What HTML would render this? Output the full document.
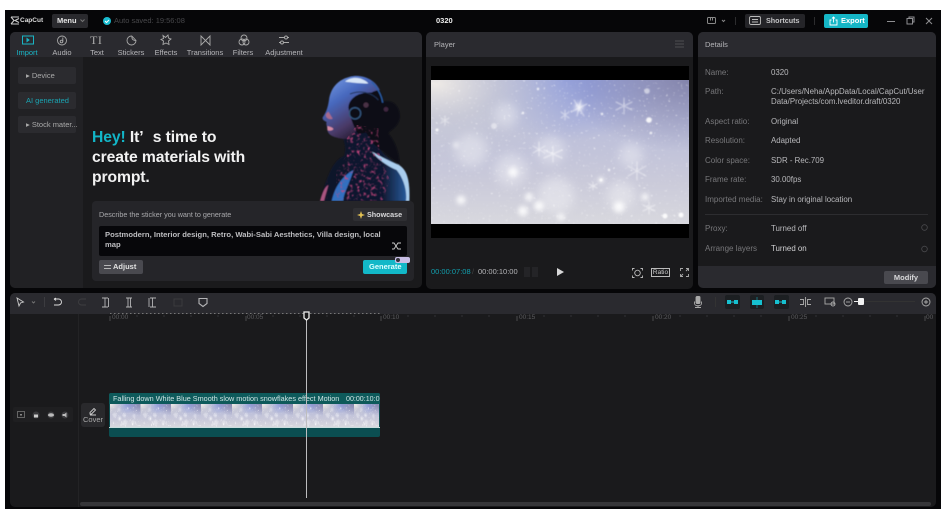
<!DOCTYPE html>
<html><head><meta charset="utf-8">
<style>
html,body{margin:0;padding:0;background:#fff;width:948px;height:522px;overflow:hidden}
*{box-sizing:border-box}
body{font-family:"Liberation Sans",sans-serif;position:relative}
#w{position:absolute;left:0;top:0;width:948px;height:522px;filter:blur(.35px)}
.a{position:absolute}
.t{position:absolute;white-space:nowrap;line-height:10px;font-size:7.5px;color:#b9b9bc}
.tab{position:absolute;top:48px;transform:translateX(-50%);font-size:7.5px;line-height:10px;color:#b5b5b8;white-space:nowrap}
.side{position:absolute;left:18px;width:58px;background:#2b2b2f;border-radius:2px;font-size:7.5px;line-height:17px;color:#aaa;padding-left:8px;white-space:nowrap}
.l{position:absolute;left:705px;font-size:8px;line-height:10px;color:#77777a;white-space:nowrap}
.v{position:absolute;left:771px;font-size:7.9px;line-height:10px;color:#b8b8bb;white-space:nowrap}
.r{position:absolute;top:314px;font-size:6.5px;line-height:8px;color:#5c5c5f;white-space:nowrap}
svg{position:absolute;overflow:visible}
</style></head><body><div id="w">
<div class="a" style="left:5px;top:10px;width:936px;height:499px;background:#060608"></div>

<!-- top bar -->
<svg style="left:10px;top:16px" width="10" height="9" viewBox="0 0 10 9" fill="none" stroke="#ccc" stroke-width="1.100"><path d="M1 1h8M1 8h8M1 1l3 3.500-3 3.500M9 2.500L5 4.500l4 2"/></svg>
<div class="t" style="left:20px;top:16px;color:#ddd;font-weight:bold;font-size:6.500px">CapCut</div>
<div class="a" style="left:52px;top:14px;width:36px;height:14px;background:#2a2a2e;border-radius:2px"></div>
<div class="t" style="left:57px;top:16px;color:#e6e6e6;font-weight:bold;font-size:7.500px">Menu</div>
<svg style="left:80px;top:19px" width="5" height="4" fill="none" stroke="#777"><path d="M.5 .5l2 2 2-2"/></svg>
<div class="a" style="left:103px;top:17px;width:8px;height:8px;border-radius:50%;background:#19bcd0"></div>
<svg style="left:103px;top:17px" width="8" height="8" fill="none" stroke="#fff"><path d="M2 4l1.500 1.500L6 3"/></svg>
<div class="t" style="left:114px;top:16px;color:#47474a">Auto saved: 19:56:08</div>
<div class="t" style="left:436px;top:16px;color:#eee;font-weight:bold;font-size:7.500px">0320</div>
<svg style="left:707px;top:17px" width="24" height="8" fill="none" stroke="#888"><rect x=".5" y=".5" width="8" height="6" rx="1"/><path d="M3.500 .5v3M5.500 .5v3M15 3l1.500 1.500L18 3"/></svg>
<div class="a" style="left:735px;top:17px;width:1px;height:8px;background:#2c2c2e"></div>
<div class="a" style="left:745px;top:14px;width:60px;height:14px;background:#242428;border-radius:2px"></div>
<svg style="left:749px;top:16px" width="12" height="10" fill="none" stroke="#bbb" stroke-width=".9"><rect x=".5" y=".5" width="11" height="8" rx="1.500"/><path d="M3 3.500h6M3 6h6"/></svg>
<div class="t" style="left:766px;top:16px;color:#c4c4c6;font-weight:bold;font-size:7.200px">Shortcuts</div>
<div class="a" style="left:814px;top:17px;width:1px;height:8px;background:#2c2c2e"></div>
<div class="a" style="left:824px;top:14px;width:44px;height:14px;background:#15b6c6;border-radius:2px"></div>
<svg style="left:829px;top:16px" width="9" height="10" fill="none" stroke="#fff" stroke-width=".9"><path d="M2.500 4H1v5h7V4H6.500M4.500 6.500V1M3 2.500L4.500 1 6 2.500"/></svg>
<div class="t" style="left:841px;top:16px;color:#fff;font-weight:bold;font-size:7.500px">Export</div>
<svg style="left:886px;top:16px" width="50" height="10" fill="none" stroke="#8f8f92"><path d="M1 5.500h8"/><rect x="21" y="2.500" width="5.500" height="5.500"/><path d="M23 2.500V1h5v5h-1.500M40 2l6 6M46 2l-6 6"/></svg>

<!-- left panel -->
<div class="a" style="left:10px;top:32px;width:412px;height:256px;background:#1a1a1c;border-radius:5px;overflow:hidden">
  <div class="a" style="left:0;top:0;width:412px;height:25px;background:#2a2a2f"></div>
  <div class="a" style="left:0;top:25px;width:73px;height:231px;background:#212124"></div>
</div>
<svg style="left:22px;top:35px" width="12" height="10" fill="none" stroke="#19b5c5"><rect x=".5" y="1" width="11" height="8"/><path d="M5 3.500l2 1.500-2 1.500z" fill="#19b5c5"/></svg>
<svg style="left:56px;top:35px" width="12" height="11" fill="none" stroke="#aaa" stroke-width=".9"><circle cx="6" cy="5.500" r="4.500"/><circle cx="5.500" cy="6.500" r="1.300"/><path d="M6.800 6.500V2.500"/></svg>
<div class="t" style="left:90px;top:34px;font-family:'Liberation Serif',serif;font-size:12px;line-height:12px;color:#aaa;letter-spacing:.5px">TI</div>
<svg style="left:126px;top:35px" width="11" height="11" fill="none" stroke="#aaa" stroke-width=".9"><path d="M5.500 1a4.500 4.500 0 1 0 4.500 4.500L6 1.200z"/><path d="M6 1.200C5.500 4 7 5.500 10 5.500"/></svg>
<svg style="left:160px;top:34px" width="12" height="12" fill="none" stroke="#aaa" stroke-width=".9"><path d="M3 1.500l2.500 2L8 1l.5 3L11 5 8.500 7l.5 3.500-3-1.500-3 1.500.5-3.500L1 5.500l2.500-1z"/></svg>
<svg style="left:200px;top:35px" width="11" height="11" fill="none" stroke="#aaa" stroke-width=".9"><path d="M1 1v9l4.500-4.500zM10 1v9L5.500 5.500z"/></svg>
<svg style="left:238px;top:34px" width="12" height="12" fill="none" stroke="#aaa" stroke-width=".9"><circle cx="6" cy="4" r="3"/><circle cx="4" cy="8" r="3"/><circle cx="8" cy="8" r="3"/></svg>
<svg style="left:278px;top:34px" width="12" height="12" fill="none" stroke="#aaa" stroke-width=".9"><path d="M1 3.500h5.500M9.500 3.500H11M1 8.500h1.500M5.500 8.500H11"/><circle cx="8" cy="3.500" r="1.500"/><circle cx="4" cy="8.500" r="1.500"/></svg>
<div class="tab" style="left:27px;color:#19b5c5">Import</div>
<div class="tab" style="left:62px">Audio</div>
<div class="tab" style="left:97px">Text</div>
<div class="tab" style="left:131px">Stickers</div>
<div class="tab" style="left:166px">Effects</div>
<div class="tab" style="left:205px">Transitions</div>
<div class="tab" style="left:243px">Filters</div>
<div class="tab" style="left:284px">Adjustment</div>

<div class="side" style="top:67px;height:17px">▸ Device</div>
<div class="side" style="top:92px;height:17px;color:#1aa5b3">AI generated</div>
<div class="side" style="top:116px;height:17px">▸ Stock mater...</div>

<div class="a" style="left:92px;top:128px;width:180px;font-size:15.700px;line-height:20px;font-weight:bold;color:#f2f2f2;letter-spacing:-.1px;white-space:nowrap"><span style="color:#12b5c7">Hey!</span> It<span style="margin-right:5px">’</span> s time to<br>create materials with<br>prompt.</div>

<!-- woman -->
<svg style="left:300px;top:70px" width="120" height="131" viewBox="0 0 360 393">
<defs>
<linearGradient id="sk" x1="0" y1="0" x2=".6" y2="1"><stop offset="0" stop-color="#7fa4ec"/><stop offset=".4" stop-color="#4768bd"/><stop offset=".75" stop-color="#4a3a68"/><stop offset="1" stop-color="#20182c"/></linearGradient>
<linearGradient id="bd" x1="0" y1="0" x2="1" y2="0"><stop offset="0" stop-color="#12142a"/><stop offset=".7" stop-color="#101830"/><stop offset="1" stop-color="#2a62a8"/></linearGradient>
<filter id="bl"><feGaussianBlur stdDeviation="1.500"/></filter>
<filter id="pk" x="0" y="0" width="100%" height="100%" color-interpolation-filters="sRGB"><feTurbulence type="fractalNoise" baseFrequency=".1" numOctaves="2" seed="7"/><feColorMatrix values="0 0 0 0 .8 0 0 0 0 .28 0 0 0 0 .5 4 0 0 0 -2.150"/><feGaussianBlur stdDeviation="1.500"/></filter>
<clipPath id="nk"><path d="M140 205L140 255 110 300 105 392 250 392 270 330 240 255 235 175 170 165z"/></clipPath>
</defs>
<g filter="url(#bl)">
<path d="M130 205C135 225 140 245 130 260C100 270 80 320 60 393L328 393C330 340 325 300 295 285C270 270 250 255 240 235L235 170L150 150z" fill="url(#bd)"/>
<path d="M150 18C200 10 245 50 250 95C285 85 305 120 298 150C290 175 270 180 265 190C290 220 300 260 298 285C270 260 240 240 220 220L160 130z" fill="#0a0c18"/>
<path d="M165 18C120 22 92 50 87 90C84 110 80 125 68 142C66 150 75 153 80 156C76 165 84 172 82 180C85 196 100 202 130 207C170 205 175 170 170 130C175 90 215 60 240 60C225 30 195 16 165 18z" fill="url(#sk)"/>
<path d="M145 112C148 78 190 58 240 72L258 130 232 182 175 192C160 170 150 140 145 112z" fill="#0a0c18"/>
<path d="M135 35C160 15 190 25 205 40C190 42 160 38 135 35z" fill="#d7e5f7"/>
<path d="M215 36C232 52 246 78 248 98" fill="none" stroke="#2a5fa8" stroke-width="4"/>
<path d="M78 132C75 146 92 150 98 146L85 125z" fill="#a96a8c"/>
<path d="M82 168C88 170 100 172 100 178C92 184 86 182 82 180z" fill="#d48aa4"/>
<circle cx="165" cy="130" r="17" fill="none" stroke="#34567f" stroke-width="4"/>
<path d="M150 72C180 60 215 66 235 90" fill="none" stroke="#243254" stroke-width="3"/>
<circle cx="198" cy="105" r="8" fill="#4a3045"/>
<circle cx="258" cy="118" r="7" fill="#40263f"/>
<path d="M95 393C105 350 125 320 160 300C150 340 130 370 130 393z" fill="#3070c0"/>
<path d="M215 245C235 270 265 290 290 300C310 325 322 360 318 393L328 393C330 340 325 295 290 282C260 270 235 255 215 245z" fill="#a9cdee"/>
<path d="M60 393C66 370 75 350 85 345C80 365 75 380 72 393z" fill="#a85580"/>
</g>
<rect x="100" y="160" width="180" height="233" filter="url(#pk)" clip-path="url(#nk)"/>
</svg>

<!-- prompt card -->
<div class="a" style="left:92px;top:201px;width:322px;height:80px;background:#252529;border-radius:4px"></div>
<div class="t" style="left:99px;top:210px;color:#a9a9ac;font-size:7.200px">Describe the sticker you want to generate</div>
<div class="a" style="left:353px;top:208px;width:54px;height:13px;background:#2f2f33;border-radius:2px"></div>
<svg style="left:357px;top:211px" width="8" height="8" fill="#e3c254"><path d="M4 0l1 3 3 1-3 1-1 3-1-3-3-1 3-1z"/></svg>
<div class="t" style="left:367px;top:210px;color:#d8d8da;font-weight:bold;font-size:7.200px">Showcase</div>
<div class="a" style="left:99px;top:226px;width:308px;height:30px;background:#07070a;border-radius:2px"></div>
<div class="t" style="left:105px;top:230px;color:#bdbdc0;font-weight:bold;font-size:7.650px">Postmodern, Interior design, Retro, Wabi-Sabi Aesthetics, Villa design, local</div>
<div class="t" style="left:105px;top:240px;color:#bdbdc0;font-weight:bold;font-size:7.650px">map</div>
<svg style="left:392px;top:242px" width="9" height="8" fill="none" stroke="#ccc" stroke-width=".9"><path d="M0 1h2l4 6h3M0 7h2l4-6h3"/></svg>
<div class="a" style="left:99px;top:260px;width:44px;height:14px;background:#49494f;border-radius:2px"></div>
<svg style="left:104px;top:264px" width="7" height="6" fill="none" stroke="#ddd" stroke-width=".8"><path d="M0 1.500h7M0 4.500h7"/></svg>
<div class="t" style="left:113px;top:262px;color:#e2e2e2;font-weight:bold">Adjust</div>
<div class="a" style="left:363px;top:260px;width:44px;height:14px;background:#12b8c8;border-radius:2px"></div>
<div class="t" style="left:369px;top:262px;color:#dff;font-weight:bold">Generate</div>
<div class="a" style="left:395px;top:257px;width:15px;height:6px;background:#c9bfe6;border-radius:2px"></div>
<div class="a" style="left:396px;top:258px;width:4px;height:4px;background:#33333a;border-radius:50%"></div>

<!-- player -->
<div class="a" style="left:426px;top:32px;width:267px;height:257px;background:#1a1a1c;border-radius:5px;overflow:hidden">
  <div class="a" style="left:0;top:0;width:267px;height:25px;background:#2a2a2f"></div>
</div>
<div class="t" style="left:434px;top:40px;color:#b5b5b8">Player</div>
<svg style="left:675px;top:40px" width="9" height="8" stroke="#4e4e52"><path d="M0 1h9M0 4h9M0 7h9"/></svg>
<div class="a" style="left:431px;top:66px;width:258px;height:172px;background:#000"></div>

<svg width="0" height="0" style="left:0;top:0">
<defs>
<linearGradient id="sb" x1="0" y1="0" x2="0" y2="1"><stop offset="0" stop-color="#aeb3d8"/><stop offset=".35" stop-color="#bcbfda"/><stop offset=".7" stop-color="#cacada"/><stop offset="1" stop-color="#d8d8de"/></linearGradient>
<radialGradient id="sc" cx=".02" cy=".03" r=".6"><stop offset="0" stop-color="#eeeae6"/><stop offset=".4" stop-color="#cfcfd6" stop-opacity=".7"/><stop offset="1" stop-color="#cfcfd6" stop-opacity="0"/></radialGradient>
<radialGradient id="sd" cx=".52" cy="0" r=".42"><stop offset="0" stop-color="#8494dc" stop-opacity=".9"/><stop offset="1" stop-color="#8f9ddd" stop-opacity="0"/></radialGradient>
<radialGradient id="se" cx="1" cy="0" r=".5"><stop offset="0" stop-color="#7878a0" stop-opacity=".8"/><stop offset="1" stop-color="#7f7fa8" stop-opacity="0"/></radialGradient>
<filter id="sn" x="0" y="0" width="100%" height="100%" color-interpolation-filters="sRGB"><feTurbulence type="fractalNoise" baseFrequency=".4" numOctaves="2" seed="11"/><feColorMatrix values="0 0 0 0 1 0 0 0 0 1 0 0 0 0 1 6 0 0 0 -4.100"/><feGaussianBlur stdDeviation=".45"/></filter>
<filter id="b3"><feGaussianBlur stdDeviation="5"/></filter>
<filter id="b2"><feGaussianBlur stdDeviation="2.500"/></filter>
<filter id="b1"><feGaussianBlur stdDeviation=".7"/></filter>
<symbol id="snow" viewBox="0 0 258 144" preserveAspectRatio="none">
<rect width="258" height="144" fill="url(#sb)"/>
<rect width="258" height="144" fill="url(#sd)"/>
<rect width="258" height="144" fill="url(#se)"/>
<rect width="258" height="144" fill="url(#sc)"/>
<g fill="#fff" filter="url(#b3)" opacity=".35">
<circle cx="40" cy="70" r="16"/><circle cx="80" cy="90" r="16"/><circle cx="125" cy="115" r="18"/><circle cx="190" cy="115" r="14"/><circle cx="120" cy="70" r="14"/><circle cx="75" cy="35" r="12"/><circle cx="200" cy="75" r="12"/>
</g>
<rect width="258" height="144" filter="url(#sn)" opacity=".6"/>
<g fill="#fff" filter="url(#b2)" opacity=".85">
<circle cx="30" cy="120" r="4.500"/><circle cx="92" cy="131" r="5"/><circle cx="108" cy="126" r="5"/><circle cx="98" cy="117" r="4"/><circle cx="188" cy="127" r="5.500"/><circle cx="82" cy="92" r="5"/><circle cx="170" cy="100" r="3"/><circle cx="148" cy="27" r="4"/><circle cx="214" cy="117" r="3.500"/><circle cx="130" cy="137" r="3.500"/><circle cx="25" cy="65" r="2.500"/>
</g>
<g fill="#fff" filter="url(#b1)" opacity=".9">
<circle cx="218" cy="40" r="2.800"/><circle cx="216" cy="11" r="2.800" opacity=".6"/><circle cx="63" cy="46" r="3" opacity=".5"/><circle cx="6" cy="50" r="1.500"/><circle cx="92" cy="33" r="1.200"/><circle cx="107" cy="9" r="1.200"/><circle cx="171" cy="34" r="1.200"/><circle cx="220" cy="53" r="1.200"/><circle cx="178" cy="90" r="1.200"/><circle cx="170" cy="100" r="1.500"/><circle cx="250" cy="135" r="2.500"/><circle cx="234" cy="136" r="2.500"/>
</g>
<g stroke="#fff" stroke-width="1" opacity=".55" fill="none" stroke-linecap="round" filter="url(#b1)">
<path d="M143 20l10 16M156 24l-16 8M150 20l-4 16M193 18v16M185 22l16 8M201 22l-16 8M122 66v16M113 70l18 8M131 70l-18 8M108 62v14M102 66l12 7M114 66l-12 7M206 82v18M197 86l18 10M215 86l-18 10M14 36v9M10 38l8 5M18 38l-8 5M134 30v10M130 32l8 6M138 32l-8 6M218 122v12M212 125l12 6M224 125l-12 6M162 102v8M158 104l8 4M166 104l-8 4"/>
</g>
</symbol>
</defs>
</svg>
<svg style="left:431px;top:80px" width="258" height="144"><use href="#snow" width="258" height="144"/></svg>

<div class="t" style="left:431px;top:267px;color:#129fae">00:00:07:08</div>
<div class="t" style="left:472px;top:267px;color:#444">/</div>
<div class="t" style="left:478px;top:267px;color:#b5b5b8">00:00:10:00</div>
<svg style="left:524px;top:267px" width="14" height="11" stroke="#36363a" stroke-width=".8"><path d="M0 1h6M0 3h6M0 5h6M0 7h6M0 9h6M8 1h6M8 3h6M8 5h6M8 7h6M8 9h6"/></svg>
<svg style="left:557px;top:268px" width="7" height="8" fill="#d8d8d8"><path d="M0 0l7 4-7 4z"/></svg>
<svg style="left:632px;top:268px" width="11" height="10" fill="none" stroke="#bbb" stroke-width=".9"><circle cx="5.500" cy="5" r="2.800"/><path d="M.5 2.500V.5h2M8.500 .5h2v2M.5 7.500v2h2M8.500 9.500h2v-2"/></svg>
<div class="a" style="left:651px;top:268px;width:19px;height:9px;border:1px solid #bbb;font-size:6.500px;line-height:7px;color:#ccc;text-align:center">Ratio</div>
<svg style="left:680px;top:268px" width="9" height="9" fill="none" stroke="#aaa" stroke-width=".9"><path d="M.5 3V.5H3M6 .5h2.500V3M.5 6v2.500H3M6 8.500h2.500V6M1 8l2-2M8 1L6 3"/></svg>

<!-- details -->
<div class="a" style="left:698px;top:32px;width:238px;height:256px;background:#1a1a1c;border-radius:5px;overflow:hidden">
  <div class="a" style="left:0;top:0;width:238px;height:25px;background:#2a2a2f"></div>
  <div class="a" style="left:0;top:234px;width:238px;height:22px;background:#2a2a2f"></div>
</div>
<div class="t" style="left:705px;top:40px;color:#b5b5b8">Details</div>
<div class="l" style="top:68px">Name:</div><div class="v" style="top:68px">0320</div>
<div class="l" style="top:87px">Path:</div><div class="v" style="top:87px">C:/Users/Neha/AppData/Local/CapCut/User</div><div class="v" style="top:97px">Data/Projects/com.lveditor.draft/0320</div>
<div class="l" style="top:117px">Aspect ratio:</div><div class="v" style="top:117px">Original</div>
<div class="l" style="top:136px">Resolution:</div><div class="v" style="top:136px">Adapted</div>
<div class="l" style="top:156px">Color space:</div><div class="v" style="top:156px">SDR - Rec.709</div>
<div class="l" style="top:175px">Frame rate:</div><div class="v" style="top:175px">30.00fps</div>
<div class="l" style="top:195px">Imported media:</div><div class="v" style="top:195px">Stay in original location</div>
<div class="a" style="left:705px;top:214px;width:223px;height:1px;background:#2d2d30"></div>
<div class="l" style="top:224px">Proxy:</div><div class="v" style="top:224px">Turned off</div>
<div class="l" style="top:244px">Arrange layers</div><div class="v" style="top:244px;color:#d0d0d2">Turned on</div>
<svg style="left:921px;top:224px" width="7" height="30" fill="none" stroke="#4a4a4d" stroke-width=".8"><circle cx="3.500" cy="3.500" r="2.800"/><circle cx="3.500" cy="25" r="2.800"/></svg>
<div class="a" style="left:884px;top:271px;width:44px;height:13px;background:#49494f;border-radius:2px;font-size:7.500px;font-weight:bold;line-height:13px;color:#d8d8da;text-align:center">Modify</div>

<!-- timeline -->
<div class="a" style="left:10px;top:293px;width:926px;height:214px;background:#1a1a1c;border-radius:5px;overflow:hidden">
  <div class="a" style="left:0;top:0;width:926px;height:21px;background:#2a2a2f"></div>
  <div class="a" style="left:68px;top:21px;width:1px;height:193px;background:#232325"></div>
</div>
<svg style="left:16px;top:297px" width="50" height="11" fill="none" stroke="#ccc" stroke-width=".9"><path d="M1 1l2 8 1.500-3 3-1z"/><path d="M16 4.500l1.500 1.500L19 4.500" stroke="#777"/></svg>
<div class="a" style="left:44px;top:297px;width:1px;height:10px;background:#3c3c40"></div>
<svg style="left:53px;top:298px" width="36" height="9" fill="none" stroke-width=".9"><path d="M1 1h4.500a2.800 2.800 0 0 1 0 6H1M1 1l2-1M1 1l2 1.500" stroke="#ddd"/><path d="M33 1h-4.500a2.800 2.800 0 0 0 0 6H33" stroke="#3d3d40"/></svg>
<svg style="left:101px;top:297px" width="112" height="11" fill="none" stroke="#b4b4b6" stroke-width=".9"><path d="M1 1h6M1 10h6M4 1v9M7.500 1v9"/><path d="M25 1h6M25 10h6M27 1v9M29.500 1v9"/><path d="M49 1h6M49 10h6M51.500 1v9M48 1v9"/><rect x="73" y="2" width="8" height="7" stroke="#3d3d40"/><path d="M98 1.500h8v5l-4 3-4-3z" stroke-width="1.100"/></svg>

<svg style="left:694px;top:296px" width="8" height="12" fill="none" stroke="#aaa" stroke-width=".9"><rect x="2" y=".5" width="4" height="7" rx="1" fill="#aaa"/><path d="M.5 5.500v2c0 3 7 3 7 0v-2M4 10v2M1 11.500h6"/></svg>
<div class="a" style="left:715px;top:297px;width:1px;height:10px;background:#333"></div>
<div class="a" style="left:725px;top:295px;width:15px;height:14px;background:#1c1f22;border-radius:2px"></div>
<div class="a" style="left:750px;top:295px;width:14px;height:14px;background:#1c1f22;border-radius:2px"></div>
<div class="a" style="left:774px;top:295px;width:15px;height:14px;background:#1c1f22;border-radius:2px"></div>
<svg style="left:727px;top:299px" width="60" height="8"><g fill="#16c0d0"><rect x="0" y="1" width="4" height="4"/><rect x="7" y="1" width="4" height="4"/><rect x="4" y="2.500" width="3" height="1"/><rect x="25" y="1" width="10" height="5"/><rect x="29.500" y="-2" width="1" height="11" opacity=".5"/><rect x="48" y="1" width="4" height="4"/><rect x="55" y="1" width="4" height="4"/><rect x="52" y="2.500" width="3" height="1"/></g></svg>
<svg style="left:800px;top:297px" width="45" height="11" fill="none" stroke="#aaa" stroke-width=".9"><path d="M5.500 0v10M0 2.500h3.500v5H0M11 2.500H7.500v5H11"/><rect x="25" y="1" width="9" height="6"/><circle cx="33" cy="7" r="2"/></svg>
<svg style="left:843px;top:297px" width="10" height="10" fill="none" stroke="#aaa" stroke-width=".9"><circle cx="5" cy="5" r="4"/><path d="M3 5h4"/></svg>
<div class="a" style="left:860px;top:301px;width:55px;height:1px;background:#333"></div>
<div class="a" style="left:858px;top:298px;width:6px;height:7px;background:#f2f2f2;border-radius:1px"></div>
<div class="a" style="left:854px;top:301px;width:5px;height:1px;background:#eee"></div>
<svg style="left:921px;top:297px" width="10" height="10" fill="none" stroke="#aaa" stroke-width=".9"><circle cx="5" cy="5" r="4"/><path d="M3 5h4M5 3v4"/></svg>

<!-- ruler -->
<svg style="left:80px;top:312px" width="856" height="8">
<path d="M30 1.500H300" stroke="#777" stroke-width="1" stroke-dasharray="1.500 2.500"/>
<path d="M30 4v5M166 4v5M301 4v5M437 4v5M573 4v5M709 4v5M845 4v5" stroke="#4a4a4d"/>
<path d="M57 3v2M84 3v2M111 3v2M138 3v2M193 3v2M220 3v2M247 3v2M274 3v2M328 3v2M355 3v2M382 3v2M409 3v2M464 3v2M491 3v2M518 3v2M545 3v2M600 3v2M627 3v2M654 3v2M681 3v2M736 3v2M763 3v2M790 3v2M817 3v2" stroke="#333336"/>
</svg>
<div class="r" style="left:112px">00:00</div>
<div class="r" style="left:247px">00:05</div>
<div class="r" style="left:383px">00:10</div>
<div class="r" style="left:519px">00:15</div>
<div class="r" style="left:655px">00:20</div>
<div class="r" style="left:791px">00:25</div>
<div class="r" style="left:926px">00</div>

<!-- track -->
<div class="a" style="left:13px;top:407px;width:60px;height:15px;background:#1f1f21;border-radius:2px"></div>
<svg style="left:17px;top:411px" width="52" height="8"><rect x=".5" y=".5" width="7" height="6" fill="none" stroke="#777" stroke-width=".8"/><rect x="3" y="3" width="2" height="1.500" fill="#888"/><circle cx="19" cy="4" r="3.500" fill="#3a3a3d"/><rect x="17" y="3.500" width="4" height="3" fill="#ccc"/><circle cx="34" cy="4" r="3.500" fill="#3a3a3d"/><ellipse cx="34" cy="4" rx="3" ry="1.800" fill="#bbb"/><circle cx="48" cy="4" r="3.500" fill="#3a3a3d"/><path d="M45.500 3h2l2-1.500v5L47.500 5h-2z" fill="#bbb"/></svg>
<div class="a" style="left:81px;top:403px;width:24px;height:24px;background:#29292c;border-radius:3px"></div>
<svg style="left:89px;top:407px" width="8" height="8" fill="none" stroke="#ccc" stroke-width=".9"><path d="M1 5.500L5 1.500l1.500 1.500L2.500 7H1zM1 8h6"/></svg>
<div class="t" style="left:83px;top:415px;color:#aaa;font-size:7.500px">Cover</div>

<div class="a" style="left:109px;top:393px;width:271px;height:44px;background:#0b4e51;border-radius:2px;overflow:hidden">
  <div class="a" style="left:0;top:0;width:271px;height:11px;background:#0e5a5b"></div>
  <div class="a" style="left:0;top:34px;width:271px;height:1px;background:#c9ddde"></div>
</div>
<div class="t" style="left:113px;top:394px;color:#cfe4e4;font-size:7.250px">Falling down White Blue Smooth slow motion snowflakes effect Motion</div>
<div class="a" style="left:346px;top:394px;width:34px;height:10px;overflow:hidden;font-size:7.100px;line-height:10px;color:#cfe4e4;white-space:nowrap;background:#0e5a5b">00:00:10:0</div>
<svg style="left:110px;top:404px" width="269" height="23">
<use href="#snow" x="0" width="31" height="23"/><use href="#snow" x="30.500" width="31" height="23"/><use href="#snow" x="61" width="31" height="23"/><use href="#snow" x="91" width="31" height="23"/><use href="#snow" x="122" width="31" height="23"/><use href="#snow" x="152" width="31" height="23"/><use href="#snow" x="183" width="31" height="23"/><use href="#snow" x="213" width="31" height="23"/><use href="#snow" x="244" width="25" height="23"/>
</svg>

<!-- playhead -->
<div class="a" style="left:306px;top:314px;width:1px;height:184px;background:#bdbdbf"></div>
<svg style="left:303px;top:311px" width="7" height="10"><path d="M1 1h5v6L3.500 9 1 7z" fill="#1a1a1c" stroke="#eee" stroke-width="1.300"/></svg>
<div class="a" style="left:80px;top:502px;width:851px;height:4px;background:#363639;border-radius:2px"></div>
</div></body></html>
